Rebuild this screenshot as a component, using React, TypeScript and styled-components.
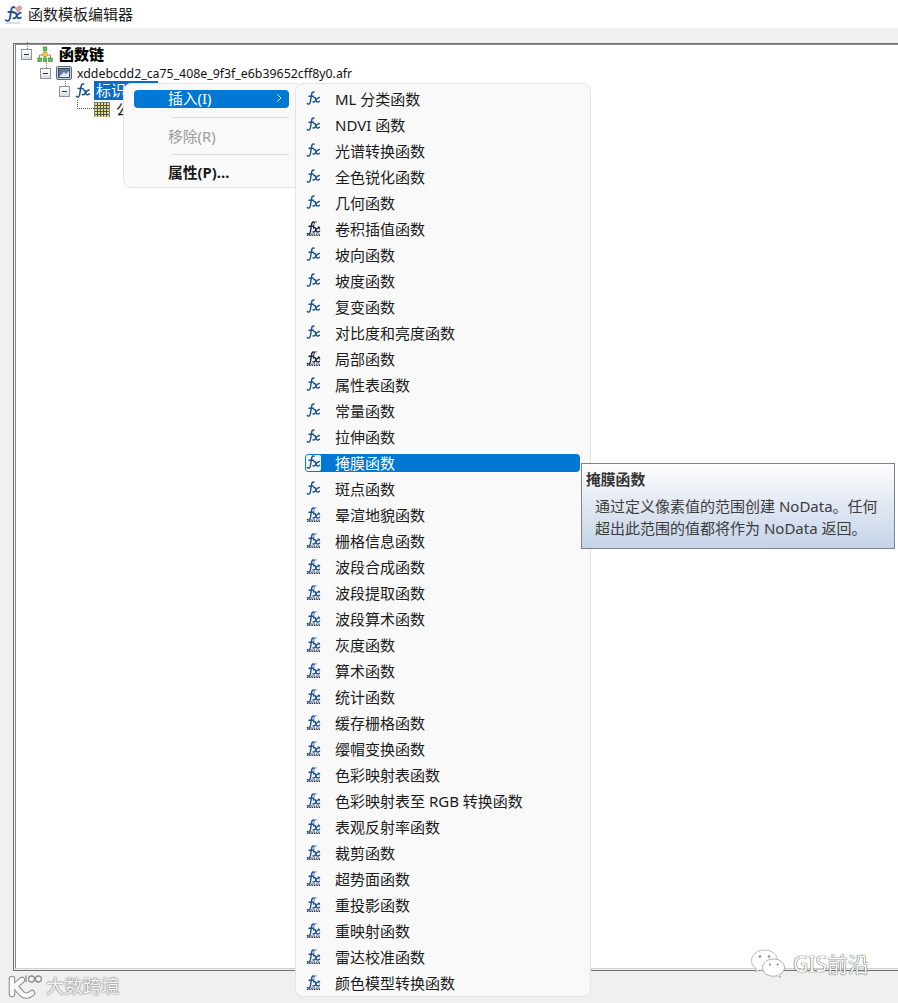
import styled, { createGlobalStyle } from "styled-components";

type IconKind = "single" | "dark" | "stack";

const functions: [string, IconKind][] = [
  ["ML 分类函数", "single"],
  ["NDVI 函数", "single"],
  ["光谱转换函数", "single"],
  ["全色锐化函数", "single"],
  ["几何函数", "single"],
  ["卷积插值函数", "dark"],
  ["坡向函数", "single"],
  ["坡度函数", "single"],
  ["复变函数", "single"],
  ["对比度和亮度函数", "single"],
  ["局部函数", "dark"],
  ["属性表函数", "single"],
  ["常量函数", "single"],
  ["拉伸函数", "single"],
  ["掩膜函数", "single"],
  ["斑点函数", "single"],
  ["晕渲地貌函数", "stack"],
  ["栅格信息函数", "stack"],
  ["波段合成函数", "stack"],
  ["波段提取函数", "stack"],
  ["波段算术函数", "stack"],
  ["灰度函数", "stack"],
  ["算术函数", "stack"],
  ["统计函数", "stack"],
  ["缓存栅格函数", "stack"],
  ["缨帽变换函数", "stack"],
  ["色彩映射表函数", "stack"],
  ["色彩映射表至 RGB 转换函数", "stack"],
  ["表观反射率函数", "stack"],
  ["裁剪函数", "stack"],
  ["超势面函数", "stack"],
  ["重投影函数", "stack"],
  ["重映射函数", "stack"],
  ["雷达校准函数", "stack"],
  ["颜色模型转换函数", "stack"],
];

const GlobalStyle = createGlobalStyle`
  html, body {
    margin: 0;
    padding: 0;
    background: #f0f0f0;
  }
  * {
    box-sizing: border-box;
  }
`;

const Window = styled.div`
  position: relative;
  width: 898px;
  height: 1003px;
  overflow: hidden;
  display: flex;
  flex-direction: column;
  background: #f0f0f0;
  color: #1a1a1a;
  font-family: "Noto Sans", "Noto Sans CJK SC", sans-serif;
  font-size: 15px;
`;

const TitleBar = styled.div`
  height: 28px;
  flex: none;
  display: flex;
  align-items: center;
  gap: 5px;
  padding: 0 0 0 4px;
  background: #fff;
  font-size: 15px;
  line-height: 28px;
`;

const Body = styled.div`
  flex: 1;
  padding: 15px 0 32px 13px;
`;

const TreeOuter = styled.div`
  height: 100%;
  padding: 0 0 1px 1px;
  border: 1px solid #707070;
  border-right: 0;
`;

const TreePanel = styled.div`
  height: 100%;
  background: #fff;
  border-top: 1px solid #8c8c8c;
  border-left: 1px solid #8c8c8c;
  border-bottom: 1px solid #cfcfcf;
`;

const TreeRow = styled.div<{ $depth: number; $tall?: boolean }>`
  position: relative;
  display: flex;
  align-items: center;
  height: ${(p) => (p.$tall ? 19 : 18)}px;
  padding-left: ${(p) => 5 + p.$depth * 19}px;
  white-space: nowrap;
`;

const Expander = styled.span`
  position: relative;
  flex: none;
  width: 11px;
  height: 11px;
  margin-right: 5px;
  border: 1px solid #8a94a0;
  background: linear-gradient(#fff, #d8dde3);

  &::before {
    content: "";
    position: absolute;
    left: 2px;
    right: 2px;
    top: 4px;
    height: 1px;
    background: #333;
  }
  &::after {
    content: "";
    position: absolute;
    left: 5px;
    top: -8px;
    height: 7px;
    border-left: 1px dotted #777;
  }
`;

const LeafLine = styled.span`
  flex: none;
  width: 17px;
  height: 9px;
  margin: -9px 0 0 -1px;
  border-left: 1px dotted #555;
  border-bottom: 1px dotted #555;
`;

const TreeIcon = styled.svg`
  flex: none;
  display: block;
`;

const ChainLabel = styled.span`
  margin-left: 6px;
  padding-bottom: 2px;
  font-weight: 900;
  font-size: 15px;
  color: #000;
`;

const FileLabel = styled.span`
  margin-left: 5px;
  padding-top: 1px;
  font-size: 12.35px;
  color: #111;
`;

const SelectedLabel = styled.span`
  display: block;
  width: 64px;
  height: 19px;
  margin: -1px 0 0 3px;
  padding-left: 2px;
  line-height: 18px;
  background: #0a6cc8;
  color: #fff;
`;

const LeafLabel = styled.span`
  margin-left: 6px;
  padding-bottom: 2px;
  color: #111;
`;

const ContextMenu = styled.div`
  position: absolute;
  left: 123px;
  top: 83px;
  width: 180px;
  height: 105px;
  padding: 6px 0 0 10px;
  background: #f9f9f9;
  border: 1px solid #e4e4e4;
  border-radius: 8px;
`;

const ContextRow = styled.div<{ $active?: boolean; $disabled?: boolean; $bold?: boolean }>`
  display: flex;
  align-items: center;
  justify-content: space-between;
  width: 155px;
  height: 18px;
  padding: 0 6px 3px 34px;
  border-radius: 4px;
  font-size: 14.8px;
  font-weight: ${(p) => (p.$bold ? 700 : 400)};
  background: ${(p) => (p.$active ? "#0078d4" : "transparent")};
  color: ${(p) => (p.$active ? "#fff" : p.$disabled ? "#9b9b9b" : "#1a1a1a")};
`;

const Chevron = styled.svg`
  display: block;
`;

const MenuDivider = styled.div<{ $above: number; $below: number }>`
  width: 117px;
  height: 1px;
  margin: ${(p) => p.$above}px 0 ${(p) => p.$below}px 38px;
  background: #dcdcdc;
`;

const FunctionMenu = styled.div`
  position: absolute;
  left: 295px;
  top: 83px;
  width: 296px;
  height: 914px;
  padding: 6px 10px 0 9px;
  display: flex;
  flex-direction: column;
  gap: 8px;
  background: #f9f9f9;
  border: 1px solid #e4e4e4;
  border-radius: 8px;
`;

const FunctionRow = styled.div<{ $active?: boolean }>`
  flex: none;
  display: flex;
  align-items: center;
  height: 18px;
  padding: 0 0 0 1px;
  border-radius: 4px;
  background: ${(p) => (p.$active ? "#0078d4" : "transparent")};
  color: ${(p) => (p.$active ? "#fff" : "#1a1a1a")};
  white-space: nowrap;
`;

const RowText = styled.span`
  padding-bottom: 2px;
`;

const FxHolder = styled.span<{ $active?: boolean }>`
  flex: none;
  display: block;
  width: 15px;
  height: 16px;
  margin-right: 14px;
  background: ${(p) => (p.$active ? "#eef5fb" : "transparent")};
  border-radius: 2px;
`;

const Tooltip = styled.div`
  position: absolute;
  left: 581px;
  top: 463px;
  width: 314px;
  height: 86px;
  padding: 5px 4px 0 4px;
  border: 1px solid #7f8388;
  background: linear-gradient(#fdfdfe, #c5d3e8);
  color: #3c3c3c;
`;

const TooltipTitle = styled.div`
  font-weight: 700;
  font-size: 14.8px;
  line-height: 20px;
  color: #333;
`;

const TooltipBody = styled.div`
  margin: 6px 0 0 9px;
  font-size: 15px;
  line-height: 22px;
  white-space: nowrap;
`;

const WatermarkLeft = styled.div`
  position: absolute;
  left: 8px;
  top: 973px;
  display: flex;
  align-items: center;
  gap: 2px;
  font-size: 18.4px;
  line-height: 26px;
  color: #f6f6f6;
  text-shadow: 0 0 2px #777, 0 0 1px #777;
`;

const WatermarkRight = styled.div`
  position: absolute;
  left: 750px;
  top: 948px;
  display: flex;
  align-items: center;
  gap: 7px;
  font-size: 21px;
  line-height: 32px;
  color: #fff;
  text-shadow: 0 0 1px #444, 0 0 1px #444;
`;

function FxIcon({ kind, size = 15 }: { kind: IconKind; size?: number }) {
  const color = kind === "dark" ? "#14273f" : "#1d4f8e";
  return (
    <svg width={size} height={size} viewBox="0 0 16 16" fill="none" aria-hidden="true" style={{ display: "block" }}>
      {kind !== "single" && (
        <g stroke={kind === "dark" ? "#444" : "#5f8fca"} strokeWidth="1.1">
          <path d="M11.5 1C9.8.2 8.8 1.4 8.4 4.2L7.8 8.5" />
          <path d="M13 5.5L15 9" />
          <path d="M1 15.4h14" stroke="#2a3a52" strokeDasharray="1.6 .9" />
          <path d="M3 14h12" stroke="#2a3a52" strokeDasharray="1.6 .9" />
        </g>
      )}
      <g stroke={color} strokeWidth="1.5" strokeLinecap="round">
        <path d="M8.6 1.2C6.9.4 6.2 2 5.8 4.6L4.7 11.4C4.3 14 3 14.6 1.4 13.4" />
        <path d="M3.2 5.6H8" />
        <path d="M8.4 7C9.9 6.6 10.3 7.8 10.6 9.4C10.9 11.6 11.9 12.4 14.4 11" />
        <path d="M14.2 7C12.6 7.1 10.6 9.4 9.7 10.7C9 11.7 8.3 12 7.5 11.5" />
      </g>
    </svg>
  );
}

function AppIcon() {
  return (
    <TreeIcon width="19" height="19" viewBox="0 0 19 19" fill="none" aria-hidden="true">
      <path d="M11.5 3.5L16 .8L18 3L14 7.5Z" fill="#e6a3a3" stroke="#b06a6a" strokeWidth=".6" />
      <g stroke="#24558f" strokeWidth="1.9" strokeLinecap="round">
        <path d="M10.5 2.4C8.6 1.4 7.6 2.8 7.1 6.1L6 13.2C5.6 15.8 4 16.5 1.8 15.2" />
        <path d="M4.4 7H9.8" />
        <path d="M10 7.8C12 7.3 12.4 8.8 12.8 10.8C13.2 13.2 14.2 14 16.8 12.6" />
        <path d="M16.6 7.8C14.8 8 12.8 10.8 11.8 12.2C11 13.3 10.2 13.6 9.2 13.2" />
      </g>
      <path d="M2 18h14" stroke="#a9bcd6" strokeWidth="1" />
    </TreeIcon>
  );
}

function ChainIcon() {
  return (
    <TreeIcon width="16" height="17" viewBox="0 0 16 17" fill="none" aria-hidden="true">
      <path d="M8 5V12M2.5 12V9H13.5V12" stroke="#8a8f70" strokeWidth="1" />
      <rect x="6.2" y="1" width="3.6" height="3.6" fill="#6cc05a" stroke="#3b8a35" strokeWidth=".7" />
      <circle cx="8" cy="8.4" r="2.4" fill="#f5d04a" stroke="#b58a18" strokeWidth=".7" />
      <rect x=".8" y="12" width="3.6" height="3.6" fill="#6cc05a" stroke="#3b8a35" strokeWidth=".7" />
      <rect x="6.2" y="12" width="3.6" height="3.6" fill="#6cc05a" stroke="#3b8a35" strokeWidth=".7" />
      <rect x="11.6" y="12" width="3.6" height="3.6" fill="#6cc05a" stroke="#3b8a35" strokeWidth=".7" />
    </TreeIcon>
  );
}

function RasterIcon() {
  return (
    <TreeIcon width="16" height="14" viewBox="0 0 16 14" fill="none" aria-hidden="true">
      <rect x=".5" y=".5" width="15" height="13" rx="1.5" fill="#c7d2de" stroke="#5c6b7c" />
      <rect x="2.5" y="2.5" width="11" height="9" fill="#5f7a9c" stroke="#27384d" strokeWidth=".8" />
      <path d="M3 11L8 6L10 8L13 5V11Z" fill="#e4e9ef" />
    </TreeIcon>
  );
}

function GridIcon() {
  const cells = [1, 4, 7, 10, 13];
  return (
    <TreeIcon width="16" height="15" viewBox="0 0 16 15" aria-hidden="true">
      <rect x=".5" y=".5" width="15" height="14" fill="#4a5444" stroke="#7a8472" />
      {cells.map((y) =>
        cells.map((x) => (
          <rect key={`${x}-${y}`} x={x} y={y} width="2" height="2" fill={(x + y) % 3 === 0 ? "#a9c96a" : "#e8da8a"} />
        ))
      )}
    </TreeIcon>
  );
}

function BrandMark() {
  return (
    <svg width="36" height="26" viewBox="0 0 36 26" fill="none" aria-hidden="true" style={{ display: "block" }}>
      <g stroke="#777" strokeWidth="6.5" strokeLinecap="round" opacity=".8">
        <path d="M4 6V21" />
        <path d="M14 7L7 13L14 21C17 23.5 21 23 24 20" />
      </g>
      <g stroke="#fafafa" strokeWidth="4.4" strokeLinecap="round" strokeLinejoin="round">
        <path d="M4 6V21" />
        <path d="M14 7L7 13L14 21C17 23.5 21 23 24 20" />
      </g>
      <g stroke="#8f8f8f" strokeWidth="1.3" fill="#f4f4f4">
        <path d="M18 2.5V9" />
        <circle cx="23.5" cy="6" r="3" />
        <circle cx="30.5" cy="6" r="3" />
      </g>
    </svg>
  );
}

function WechatMark() {
  return (
    <svg width="36" height="32" viewBox="0 0 35 32" fill="none" aria-hidden="true" style={{ display: "block" }}>
      <path d="M14 2C6.5 2 1 6.8 1 12.6C1 16 3 18.8 6 20.8L5 24L9 22C10.5 22.6 12.2 22.8 14 22.8C21.5 22.8 27 18 27 12.4C27 6.8 21.5 2 14 2Z" fill="#fff" stroke="#aaa" strokeWidth=".8" />
      <path d="M23 11C16.5 11 12 15 12 19.6C12 24.4 16.5 28.2 23 28.2C24.4 28.2 25.6 28 26.8 27.6L30 29.6L29.2 26.4C32 24.8 34 22.4 34 19.6C34 15 29.5 11 23 11Z" fill="#fff" stroke="#999" strokeWidth=".8" />
      <g fill="#888">
        <circle cx="9.5" cy="8.5" r="1.2" />
        <circle cx="18.5" cy="8.5" r="1.2" />
        <circle cx="19.5" cy="16.5" r="1" />
        <circle cx="27" cy="16.5" r="1" />
      </g>
    </svg>
  );
}

export default function App() {
  return (
    <Window>
      <GlobalStyle />
      <TitleBar>
        <AppIcon />
        函数模板编辑器
      </TitleBar>
      <Body>
        <TreeOuter>
          <TreePanel>
            <TreeRow $depth={0} $tall>
              <Expander />
              <ChainIcon />
              <ChainLabel>函数链</ChainLabel>
            </TreeRow>
            <TreeRow $depth={1}>
              <Expander />
              <RasterIcon />
              <FileLabel>xddebcdd2_ca75_408e_9f3f_e6b39652cff8y0.afr</FileLabel>
            </TreeRow>
            <TreeRow $depth={2}>
              <Expander />
              <FxIcon kind="single" size={16} />
              <SelectedLabel>标识函数</SelectedLabel>
            </TreeRow>
            <TreeRow $depth={3}>
              <LeafLine />
              <GridIcon />
              <LeafLabel>公式</LeafLabel>
            </TreeRow>
          </TreePanel>
        </TreeOuter>
      </Body>

      <ContextMenu>
        <ContextRow $active>
          插入(I)
          <Chevron width="7" height="10" viewBox="0 0 7 10" fill="none" aria-hidden="true">
            <path d="M1.5 1.5L5 5L1.5 8.5" stroke="#fff" strokeWidth="1" />
          </Chevron>
        </ContextRow>
        <MenuDivider $above={9} $below={10} />
        <ContextRow $disabled>移除(R)</ContextRow>
        <MenuDivider $above={8} $below={9} />
        <ContextRow $bold>属性(P)...</ContextRow>
      </ContextMenu>

      <FunctionMenu>
        {functions.map(([name, kind]) => {
          const active = name === "掩膜函数";
          return (
            <FunctionRow key={name} $active={active}>
              <FxHolder $active={active}>
                <FxIcon kind={kind} />
              </FxHolder>
              <RowText>{name}</RowText>
            </FunctionRow>
          );
        })}
      </FunctionMenu>

      <Tooltip>
        <TooltipTitle>掩膜函数</TooltipTitle>
        <TooltipBody>
          通过定义像素值的范围创建 NoData。任何
          <br />
          超出此范围的值都将作为 NoData 返回。
        </TooltipBody>
      </Tooltip>

      <WatermarkLeft>
        <BrandMark />
        大数跨境
      </WatermarkLeft>
      <WatermarkRight>
        <WechatMark />
        GIS前沿
      </WatermarkRight>
    </Window>
  );
}
